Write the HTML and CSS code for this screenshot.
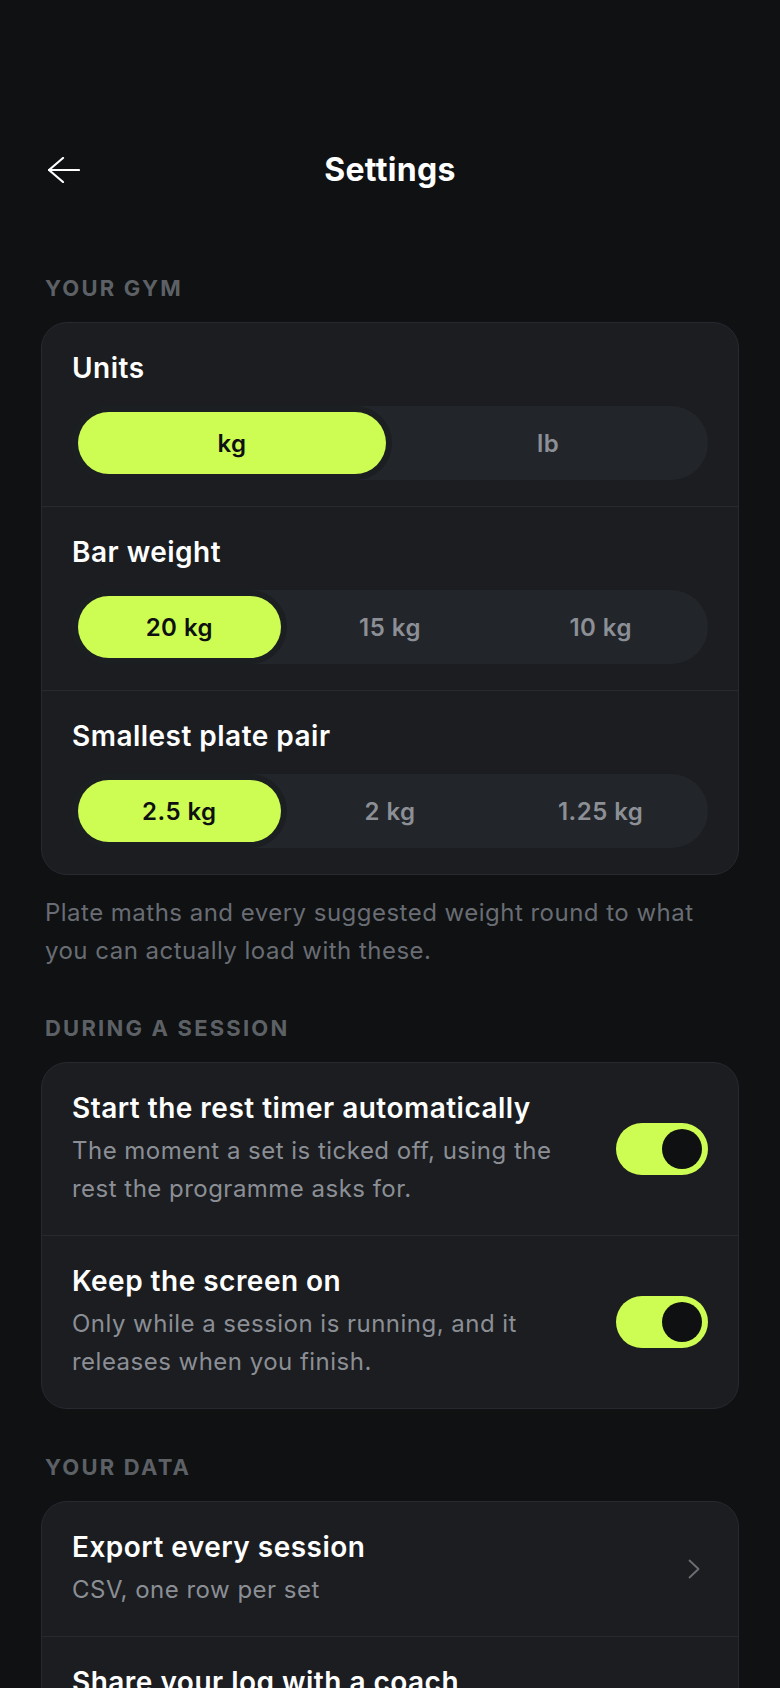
FILE: index.html
```html
<!DOCTYPE html>
<html lang="en">
<head>
  <meta charset="UTF-8">
  <title>Settings</title>
  <link rel="stylesheet" href="styles.css">
</head>
<body>
<div class="screen">
  <header class="topbar">
    <button class="back-button" aria-label="Back">
      <svg width="32" height="26" viewBox="0 0 32 26" fill="none" stroke="#fff" stroke-width="2.2" stroke-linecap="round" stroke-linejoin="round">
        <path d="M31 13H1"/>
        <path d="M15 1L1 13l14 12"/>
      </svg>
    </button>
    <h1 class="title">Settings</h1>
    <span></span>
  </header>

  <!-- Gym equipment -->
  <section class="section section-first">
    <h2 class="section-label">Your gym</h2>
    <div class="card">
      <div class="row row-picker">
        <div class="row-label">Units</div>
        <div class="segmented two">
          <div class="segment active">kg</div>
          <div class="segment">lb</div>
        </div>
      </div>
      <div class="row row-picker">
        <div class="row-label">Bar weight</div>
        <div class="segmented three">
          <div class="segment active">20 kg</div>
          <div class="segment">15 kg</div>
          <div class="segment">10 kg</div>
        </div>
      </div>
      <div class="row row-picker">
        <div class="row-label">Smallest plate pair</div>
        <div class="segmented three">
          <div class="segment active">2.5 kg</div>
          <div class="segment">2 kg</div>
          <div class="segment">1.25 kg</div>
        </div>
      </div>
    </div>
    <p class="note">Plate maths and every suggested weight round to what you can actually load with these.</p>
  </section>

  <!-- Session behaviour -->
  <section class="section">
    <h2 class="section-label">During a session</h2>
    <div class="card">
      <div class="row row-inline">
        <div class="row-text">
          <div class="row-label">Start the rest timer automatically</div>
          <div class="row-desc">The moment a set is ticked off, using the rest the programme asks for.</div>
        </div>
        <div class="toggle on"><span class="knob"></span></div>
      </div>
      <div class="row row-inline">
        <div class="row-text">
          <div class="row-label">Keep the screen on</div>
          <div class="row-desc">Only while a session is running, and it releases when you finish.</div>
        </div>
        <div class="toggle on"><span class="knob"></span></div>
      </div>
    </div>
  </section>

  <!-- Data -->
  <section class="section">
    <h2 class="section-label">Your data</h2>
    <div class="card">
      <div class="row row-inline">
        <div class="row-text">
          <div class="row-label">Export every session</div>
          <div class="row-desc">CSV, one row per set</div>
        </div>
        <svg class="chevron" width="12" height="20" viewBox="0 0 12 20" fill="none" stroke="#6b6f75" stroke-width="1.8" stroke-linecap="round" stroke-linejoin="round">
          <path d="M1.5 1.5L10.5 10l-9 8.5"/>
        </svg>
      </div>
      <div class="row row-inline">
        <div class="row-text">
          <div class="row-label">Share your log with a coach</div>
          <div class="row-desc">A read-only link to every session</div>
        </div>
        <svg class="chevron" width="12" height="20" viewBox="0 0 12 20" fill="none" stroke="#6b6f75" stroke-width="1.8" stroke-linecap="round" stroke-linejoin="round">
          <path d="M1.5 1.5L10.5 10l-9 8.5"/>
        </svg>
      </div>
    </div>
  </section>
</div>
</body>
</html>
```

FILE: styles.css
```css
body {
  font-family: 'Inter', 'Noto Sans', sans-serif;
  background-color: #0f1113;
  color: #f8f8f8;
  margin: 0;
  letter-spacing: 0.03em;
}
.screen {
  padding: 138px 41px 60px;
}
.topbar {
  height: 64px;
  display: grid;
  grid-template-columns: 1fr auto 1fr;
  align-items: center;
}
.back-button {
  justify-self: start;
  margin-left: 7px;
  padding: 0;
  border: none;
  background: transparent;
  display: flex;
  cursor: pointer;
}
.title {
  margin: 0;
  font-size: 32px;
  line-height: 40px;
  font-weight: 700;
  letter-spacing: 0.01em;
  color: #fff;
}
.section {
  margin-top: 44px;
}
.section-first {
  margin-top: 72px;
}
.section-label {
  margin: 0 4px 20px;
  font-size: 22px;
  line-height: 28px;
  font-weight: 700;
  letter-spacing: 0.1em;
  text-transform: uppercase;
  color: #5d6166;
}
.card {
  background-color: #1b1d21;
  border: 1px solid #26292e;
  border-radius: 26px;
  overflow: hidden;
}
.row {
  padding: 27px 30px;
}
.row-picker {
  padding-bottom: 26px;
}
.row + .row {
  border-top: 1px solid #272a2f;
}
.row-inline {
  display: flex;
  align-items: center;
  gap: 24px;
}
.row-text {
  flex: 1;
  max-width: 500px;
}
.row-label {
  font-size: 28px;
  line-height: 36px;
  font-weight: 600;
  color: #fff;
}
.row-desc {
  margin-top: 6px;
  font-size: 24px;
  line-height: 38px;
  color: #8b8f95;
}
.row-inline .toggle,
.row-inline .chevron {
  margin-left: auto;
  flex-shrink: 0;
}
.chevron {
  margin-right: 8px;
}

/* segmented picker */
.segmented {
  margin-top: 20px;
  display: grid;
  gap: 8px;
  padding: 6px;
  background-color: #22252a;
  border-radius: 999px;
}
.segmented.two {
  grid-template-columns: 1fr 1fr;
}
.segmented.three {
  grid-template-columns: 1fr 1fr 1fr;
}
.segment {
  height: 62px;
  display: flex;
  align-items: center;
  justify-content: center;
  border-radius: 999px;
  font-size: 24px;
  font-weight: 600;
  color: #8c9096;
}
.segment.active {
  background-color: #cdfd52;
  color: #0e1012;
  box-shadow: 0 0 0 6px #1c1f22;
}

.note {
  margin: 19px 40px 0 4px;
  font-size: 24px;
  line-height: 38px;
  color: #696d73;
}

/* switch */
.toggle {
  width: 92px;
  height: 52px;
  border-radius: 26px;
  background-color: #3a3e44;
  display: flex;
  align-items: center;
  padding: 0 6px;
  box-sizing: border-box;
}
.toggle.on {
  background-color: #cdfd52;
  justify-content: flex-end;
}
.knob {
  width: 40px;
  height: 40px;
  border-radius: 50%;
  background-color: #0e1012;
}
```
